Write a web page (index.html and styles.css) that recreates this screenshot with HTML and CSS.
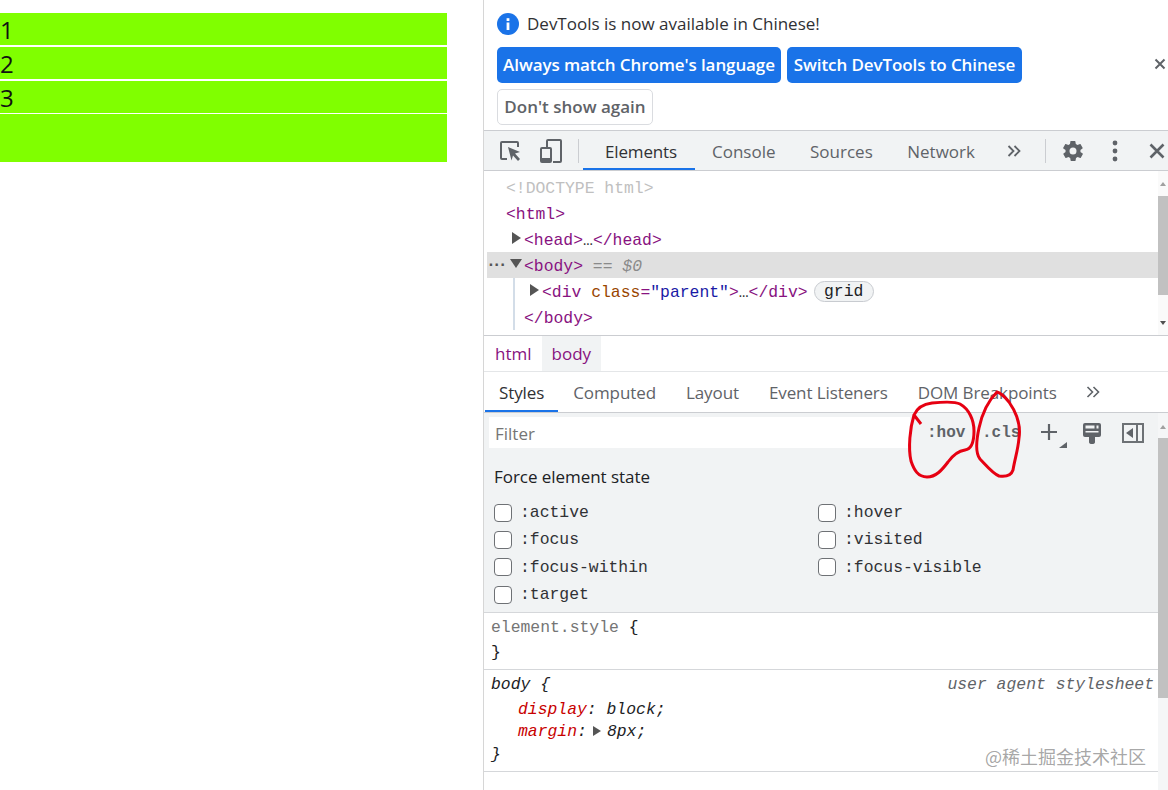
FILE: index.html
```html
<!DOCTYPE html>
<html>
    <head>
        <meta charset="utf-8">
        <title>grid</title>
        <link rel="stylesheet" href="styles.css">
    </head>
    <body>
        <div class="page">
            <div class="parent">
                <div class="item">1</div>
                <div class="item">2</div>
                <div class="item">3</div>
                <div class="item last"></div>
            </div>
        </div>
        <div class="devtools">
            <div class="infobar">
                <div class="info_line">
                    <svg class="info_icon" width="22" height="22" viewBox="0 0 22 22"><circle cx="11" cy="11" r="11" fill="#1a73e8"/><rect x="9.6" y="9.5" width="2.8" height="7.5" fill="#fff"/><rect x="9.6" y="5.2" width="2.8" height="2.8" fill="#fff"/></svg>
                    <span class="info_text">DevTools is now available in Chinese!</span>
                </div>
                <div class="info_btns">
                    <span class="btn primary w1">Always match Chrome's language</span>
                    <span class="btn primary w2">Switch DevTools to Chinese</span>
                    <svg class="info_close" width="12" height="12" viewBox="0 0 12 12"><path d="M1.5 1.5l9 9M10.5 1.5l-9 9" stroke="#5f6368" stroke-width="2"/></svg>
                </div>
                <div class="info_btns">
                    <span class="btn plain">Don't show again</span>
                </div>
            </div>
            <div class="toolbar">
                <svg class="tool_inspect" width="24" height="24" viewBox="0 0 24 24" fill="none"><path d="M8 20H3a1 1 0 0 1-1-1V4a1 1 0 0 1 1-1h15a1 1 0 0 1 1 1v4" stroke="#5f6368" stroke-width="2"/><path d="M9 8l12 5-5 1.6 5 5.4-2 2-5-5.400-1.500 5z" fill="#5f6368"/></svg>
                <svg class="tool_device" width="24" height="24" viewBox="0 0 24 24" fill="none"><path d="M8 8V2a1 1 0 0 1 1-1h12a1 1 0 0 1 1 1v20a1 1 0 0 1-1 1h-7" stroke="#5f6368" stroke-width="2"/><rect x="2" y="9" width="10" height="14" rx="1" stroke="#5f6368" stroke-width="2"/><rect x="2" y="19" width="10" height="4" fill="#5f6368"/></svg>
                <span class="sep sep1"></span>
                <div class="main_tabs">
                    <span class="main_tab active">Elements</span>
                    <span class="main_tab">Console</span>
                    <span class="main_tab">Sources</span>
                    <span class="main_tab">Network</span>
                </div>
                <svg class="tool_more" width="14" height="12" viewBox="0 0 14 12" fill="none"><path d="M1.5 1l5 5-5 5M7.5 1l5 5-5 5" stroke="#5f6368" stroke-width="1.8"/></svg>
                <span class="sep sep2"></span>
                <svg class="tool_gear" width="24" height="24" viewBox="0 0 24 24"><path fill="#5f6368" fill-rule="evenodd" d="M19.4 13c.1-.3.1-.7.1-1s0-.7-.1-1l2.1-1.6c.2-.2.2-.4.1-.6l-2-3.5c-.1-.2-.4-.3-.6-.2l-2.5 1c-.5-.4-1.1-.7-1.7-1l-.4-2.6c0-.3-.2-.5-.5-.5h-4c-.3 0-.5.2-.5.4l-.4 2.7c-.6.2-1.1.6-1.7 1l-2.5-1c-.2-.1-.5 0-.6.2l-2 3.5c-.1.2-.1.5.1.6L4.6 11c-.1.3-.1.7-.1 1s0 .7.1 1l-2.1 1.6c-.2.2-.2.4-.1.6l2 3.5c.1.2.4.3.6.2l2.5-1c.5.4 1.1.7 1.7 1l.4 2.6c0 .3.2.5.5.5h4c.3 0 .5-.2.5-.4l.4-2.7c.6-.2 1.1-.6 1.7-1l2.5 1c.2.1.5 0 .6-.2l2-3.5c.1-.2.1-.5-.1-.6zM12 15.500a3.500 3.500 0 1 1 0-7 3.500 3.500 0 0 1 0 7z"/></svg>
                <svg class="tool_dots" width="6" height="22" viewBox="0 0 6 22"><circle cx="3" cy="3" r="2.4" fill="#5f6368"/><circle cx="3" cy="11" r="2.4" fill="#5f6368"/><circle cx="3" cy="19" r="2.4" fill="#5f6368"/></svg>
                <svg class="tool_close" width="16" height="16" viewBox="0 0 16 16"><path d="M1.5 1.5l13 13M14.5 1.5l-13 13" stroke="#5f6368" stroke-width="2.6"/></svg>
            </div>
            <div class="tree">
                <div class="tree_body">
                    <div class="row ind0 doctype">&lt;!DOCTYPE html&gt;</div>
                    <div class="row ind0 tag">&lt;html&gt;</div>
                    <div class="row ind1 tag"><i class="tri right"></i>&lt;head&gt;<b>…</b>&lt;/head&gt;</div>
                    <div class="row ind1 tag selected"><span class="row_dots">···</span><i class="tri down"></i>&lt;body&gt; <em>== $0</em></div>
                    <div class="guide">
                        <div class="row ind2 tag"><i class="tri right"></i>&lt;div <span class="attr">class</span><span class="eq">=</span><span class="val">"parent"</span>&gt;<b>…</b>&lt;/div&gt;<span class="badge">grid</span></div>
                        <div class="row ind1 tag">&lt;/body&gt;</div>
                    </div>
                </div>
                <div class="scrollbar">
                    <i class="arrow up"></i>
                    <div class="thumb"></div>
                    <i class="arrow dn"></i>
                </div>
            </div>
            <div class="crumbs">
                <span class="crumb">html</span>
                <span class="crumb on">body</span>
            </div>
            <div class="side_tabs">
                <span class="side_tab active">Styles</span>
                <span class="side_tab">Computed</span>
                <span class="side_tab">Layout</span>
                <span class="side_tab">Event Listeners</span>
                <span class="side_tab">DOM Breakpoints</span>
                <svg class="side_more" width="14" height="12" viewBox="0 0 14 12" fill="none"><path d="M1.5 1l5 5-5 5M7.5 1l5 5-5 5" stroke="#5f6368" stroke-width="1.6"/></svg>
            </div>
            <div class="styles">
                <div class="styles_main">
                    <div class="force">
                        <div class="filter_row">
                            <div class="filter">Filter</div>
                            <span class="hov">:hov</span>
                            <span class="cls">.cls</span>
                            <svg class="plus" width="26" height="27" viewBox="0 0 26 27"><path d="M8 3v16M0 11h16" stroke="#5f6368" stroke-width="2.2"/><path d="M26 21v6h-8z" fill="#5f6368"/></svg>
                            <svg class="paint" width="18" height="21" viewBox="0 0 18 21" fill="none"><path d="M2 0h14a2 2 0 0 1 2 2v10a2 2 0 0 1-2 2H2a2 2 0 0 1-2-2V2a2 2 0 0 1 2-2z" fill="#5f6368"/><path d="M2.500 2.500h9v3h-9zM13.500 2.500h2v3h-2zM2.500 8h13v1.500h-13z" fill="#f1f3f4"/><path d="M6 14h6v5a3 2 0 0 1-6 0z" fill="#5f6368"/></svg>
                            <svg class="sidebar_icon" width="22" height="20" viewBox="0 0 22 20" fill="none"><rect x="1" y="1" width="20" height="18" stroke="#6d7175" stroke-width="2"/><path d="M15 2v16" stroke="#6d7175" stroke-width="2"/><path d="M11 5v10l-7-5z" fill="#5f6368"/></svg>
                        </div>
                        <div class="force_title">Force element state</div>
                        <div class="states">
                            <label class="state"><i class="box"></i>:active</label>
                            <label class="state"><i class="box"></i>:hover</label>
                            <label class="state"><i class="box"></i>:focus</label>
                            <label class="state"><i class="box"></i>:visited</label>
                            <label class="state"><i class="box"></i>:focus-within</label>
                            <label class="state"><i class="box"></i>:focus-visible</label>
                            <label class="state"><i class="box"></i>:target</label>
                        </div>
                    </div>
                    <div class="rule first">
                        <div class="line grey">element.style <span class="brace">{</span></div>
                        <div class="line">}</div>
                    </div>
                    <div class="rule second">
                        <div class="line it head_line"><span>body {</span><span class="ua">user agent stylesheet</span></div>
                        <div class="line it decl tight"><span class="prop">display</span>: block;</div>
                        <div class="line it decl short"><span class="prop">margin</span>:<i class="tri right small"></i>8px;</div>
                        <div class="line it short close_brace">}</div>
                    </div>
                </div>
                <div class="scrollbar low">
                    <i class="arrow up"></i>
                    <div class="thumb"></div>
                </div>
            </div>
        </div>
        <svg class="marks" width="1168" height="790" viewBox="0 0 1168 790" fill="none">
            <path d="M921 424L914 415C917 408 924 404 932 403C942 402 954 401 960 404C969 409 974 420 974 431C974 441 972 449 965 450C958 451 953 455 948 462C942 470 936 477 927 477C918 477 914 470 911 461C908 448 910 428 914 415" stroke="#e60012" stroke-width="3"/>
            <path d="M997 392C989 400 982 414 979 428C976 442 975 453 980 459C986 465 992 473 999 476C1006 477 1011 476 1013 470C1015 458 1018 450 1019 438C1021 425 1016 412 1009 402C1005 397 1001 393 997 392Z" stroke="#e60012" stroke-width="3"/>
        </svg>
        <div class="watermark">@稀土掘金技术社区</div>
    </body>
</html>
```

FILE: styles.css
```css
* {
    box-sizing:border-box;
}
html, body {
    margin:0;
    height:790px;
    overflow:hidden;
    background:#fff;
}
body {
    display:flex;
    font-family:"Open Sans", "Noto Sans", sans-serif;
    color:#202124;
}
i, em {
    font-style:normal;
}
svg {
    display:block;
    flex:none;
}

/* left page */
.page {
    width:484px;
    flex:none;
    border-right:1px solid #d6d6d6;
    padding-top:13px;
}
.parent {
    display:grid;
    gap:2px;
    width:446px;
}
.item {
    height:32px;
    background:#80ff00;
    font-size:24px;
    line-height:34px;
    color:#111;
}
.item.last {
    width:447px;
    height:48px;
    margin-top:-1px;
}

/* devtools */
.devtools {
    flex:1;
    min-width:0;
    height:790px;
    display:flex;
    flex-direction:column;
}
.infobar {
    height:131px;
    padding:13px 0 0 13px;
    border-bottom:1px solid #cbcdd1;
}
.info_line {
    display:flex;
    align-items:center;
    gap:8px;
    height:22px;
    font-size:17px;
    color:#303134;
    margin-bottom:12px;
}
.info_text {
    padding-bottom:2px;
}
.info_btns {
    display:flex;
    align-items:center;
    gap:6px;
    margin-bottom:6px;
    position:relative;
}
.btn {
    height:36px;
    line-height:36px;
    border-radius:5px;
    font-size:17px;
    font-weight:600;
    text-align:center;
    white-space:nowrap;
}
.primary {
    background:#1a73e8;
    color:#fff;
    letter-spacing:-.1px;
}
.w1 {
    width:284px;
}
.w2 {
    width:235px;
}
.plain {
    width:156px;
    line-height:33px;
    border:1px solid #dadce0;
    color:#5f6368;
}
.info_close {
    position:absolute;
    left:657px;
    top:11px;
}
.toolbar {
    height:40px;
    flex:none;
    background:#f1f3f4;
    border-bottom:1px solid #cbcdd1;
    display:flex;
    align-items:center;
    padding-left:15px;
}
.tool_device {
    margin-left:16px;
}
.sep {
    width:1px;
    height:24px;
    background:#cbcdd1;
    flex:none;
}
.sep1 {
    margin:0 4px 0 15px;
}
.main_tabs {
    display:flex;
    height:39px;
}
.main_tab {
    padding:0 17.500px 0 17px;
    line-height:41px;
    font-size:17px;
    color:#5f6368;
}
.main_tab.active {
    padding:0 18px 0 22px;
    width:112px;
    letter-spacing:-.15px;
    color:#303134;
    border-bottom:2px solid #1a73e8;
}
.tool_more {
    margin-left:14.500px;
}
.sep2 {
    margin-left:24px;
}
.tool_gear {
    margin-left:15px;
}
.tool_dots {
    margin-left:27px;
}
.tool_close {
    margin-left:31px;
}

/* dom tree */
.tree {
    height:165px;
    flex:none;
    display:flex;
    border-bottom:1px solid #cbcdd1;
}
.tree_body {
    flex:1;
    padding:3px 0 0 3px;
}
.row, .line, .state, .hov, .cls {
    font-family:"Liberation Mono", "DejaVu Sans Mono", monospace;
    font-size:16.4px;
}
.row {
    height:26px;
    line-height:29px;
    white-space:nowrap;
    position:relative;
}
.row b {
    font-weight:normal;
    color:#333;
}
.ind0 {
    padding-left:19px;
}
.ind1 {
    padding-left:37px;
}
.ind2 {
    padding-left:55px;
}
.doctype {
    color:#c0c0c0;
}
.tag {
    color:#881280;
}
.attr {
    color:#994500;
}
.eq {
    color:#881280;
}
.val {
    color:#1a1aa6;
}
.selected {
    background:#e0e0e0;
}
.selected em {
    font-style:italic;
    color:#8a8a8a;
}
.row_dots {
    position:absolute;
    left:-1px;
    top:-2px;
    font-weight:bold;
    color:#555;
    letter-spacing:-4px;
}
.guide {
    background:linear-gradient(#d3dde8, #d3dde8) 26px 0 / 2px 100% no-repeat;
}
.tri {
    position:absolute;
    width:0;
    height:0;
}
.tri.right {
    border-left:9px solid #555;
    border-top:6px solid transparent;
    border-bottom:6px solid transparent;
    margin-left:-12px;
    top:6px;
}
.tri.down {
    border-top:9px solid #555;
    border-left:6px solid transparent;
    border-right:6px solid transparent;
    margin-left:-14px;
    top:7px;
}
.tri.small {
    position:static;
    display:inline-block;
    margin:0 6px 0 6px;
    border-left-width:8px;
    border-top-width:5px;
    border-bottom-width:5px;
}
.badge {
    display:inline-block;
    margin-left:6px;
    width:60px;
    height:21px;
    line-height:20px;
    border:1px solid #c8cbd0;
    border-radius:11px;
    background:#f1f3f4;
    color:#202124;
    text-align:center;
    vertical-align:1px;
}
.scrollbar {
    width:10px;
    flex:none;
    padding-top:25px;
    position:relative;
    background:#fafafa;
}
.thumb {
    height:99px;
    background:#c1c1c1;
}
.arrow {
    position:absolute;
    left:2px;
    width:0;
    height:0;
    border-left:3.5px solid transparent;
    border-right:3.5px solid transparent;
}
.arrow.up {
    top:11px;
    border-bottom:4px solid #a0a0a0;
}
.arrow.dn {
    bottom:10px;
    border-top:4px solid #505050;
}

/* breadcrumbs */
.crumbs {
    height:36px;
    flex:none;
    display:flex;
    padding-left:1px;
    border-bottom:1px solid #e4e6e8;
}
.crumb {
    padding:0 10px;
    line-height:35px;
    font-size:17px;
    color:#881280;
}
.crumb.on {
    background:#f1f3f4;
}

/* sidebar tabs */
.side_tabs {
    height:41px;
    flex:none;
    display:flex;
    align-items:center;
    border-bottom:1px solid #cbcdd1;
}
.side_tab {
    height:40px;
    padding:0 15px;
    line-height:42px;
    font-size:17px;
    letter-spacing:-.1px;
    color:#5f6368;
    white-space:nowrap;
}
.side_tab.active {
    margin-left:1px;
    padding:0 14px;
    color:#303134;
    border-bottom:2px solid #1a73e8;
}
.side_more {
    margin-left:14px;
}

/* styles pane */
.styles {
    flex:1;
    display:flex;
    min-height:0;
}
.styles_main {
    flex:1;
    min-width:0;
}
.force {
    height:200px;
    background:#f1f3f4;
    border-bottom:1px solid #d5d7da;
    padding:4px 0 0 5px;
}
.filter_row {
    display:flex;
    align-items:center;
    height:31px;
}
.filter {
    width:421px;
    height:31px;
    background:#fff;
    padding-left:6px;
    line-height:33px;
    font-size:17px;
    color:#757575;
}
.hov, .cls {
    font-weight:bold;
    font-size:16px;
    color:#5f6368;
    width:55px;
}
.hov {
    margin-left:17px;
}
.plus {
    margin-left:4px;
    margin-top:4px;
}
.paint {
    margin-left:16px;
    margin-top:1px;
}
.sidebar_icon {
    margin-left:21px;
    margin-top:1px;
}
.force_title {
    font-size:17px;
    letter-spacing:-.05px;
    margin:17px 0 10px 5px;
    line-height:24px;
}
.states {
    display:grid;
    grid-template-columns:324px 1fr;
    padding-left:5px;
}
.state {
    display:flex;
    align-items:center;
    height:27.300px;
    color:#303134;
}
.box {
    width:18px;
    height:18px;
    border:1.5px solid #6e7175;
    border-radius:4px;
    background:#fff;
    margin-right:8px;
}
.rule {
    padding:2px 0 0 7px;
    border-bottom:1px solid #d5d7da;
}
.rule.first {
    height:57px;
}
.rule.second {
    height:102px;
}
.line {
    height:25px;
    line-height:25px;
    color:#202124;
}
.line.tight {
    height:24px;
}
.line.short {
    height:22px;
    line-height:22px;
}
.line.close_brace {
    line-height:24px;
}
.grey {
    color:#757575;
}
.brace {
    color:#202124;
}
.it {
    font-style:italic;
}
.head_line {
    display:flex;
    justify-content:space-between;
    padding-right:4px;
}
.ua {
    color:#5f6368;
}
.decl {
    padding-left:27px;
}
.prop {
    color:#c80000;
}
.low {
    background:#f5f6f7;
}
.low .thumb {
    height:260px;
}
.low .arrow.up {
    top:12px;
}

/* overlays on top of the screenshot */
.marks {
    position:absolute;
    left:0;
    top:0;
    pointer-events:none;
}
.watermark {
    position:absolute;
    left:985px;
    top:744px;
    font-family:"Noto Sans CJK SC", sans-serif;
    font-size:18px;
    line-height:24px;
    color:rgba(110,110,110,.62);
}
```
